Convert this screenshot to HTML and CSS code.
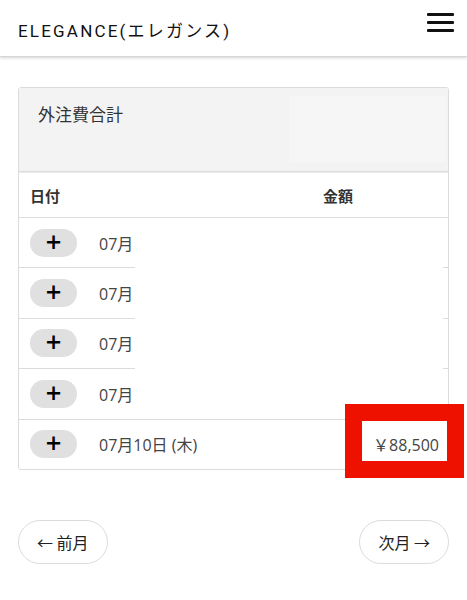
FILE: index.html
```html
<!DOCTYPE HTML>
<html lang="ja">
<head>
	<title>外注費合計</title>
	<meta charset="utf-8">
	<meta name="viewport" content="width=device-width, initial-scale=1">
	<link rel="stylesheet" href="styles.css">
</head>
<body>
	<!-- top bar -->
	<header class="topbar">
		<span class="brand">ELEGANCE(エレガンス)</span>
		<span class="burger"><i></i><i></i><i></i></span>
	</header>

	<main>
		<section class="card">
			<div class="card-head">
				<h3>外注費合計</h3>
				<div class="head-patch"></div>
			</div>

			<div class="list">
				<div class="row row-th">
					<span class="c-date">日付</span>
					<span class="th-amount">金額</span>
				</div>
				<div class="row">
					<span class="plus">+</span>
					<span class="c-date">07月</span>
				</div>
				<div class="row">
					<span class="plus">+</span>
					<span class="c-date">07月</span>
				</div>
				<div class="row">
					<span class="plus">+</span>
					<span class="c-date">07月</span>
				</div>
				<div class="row">
					<span class="plus">+</span>
					<span class="c-date">07月</span>
				</div>
				<div class="row">
					<span class="plus">+</span>
					<span class="c-date">07月10日 (木)</span>
					<span class="c-amount">￥88,500</span>
				</div>

				<!-- masked area + highlight drawn over the list -->
				<div class="mask"></div>
				<div class="mark"></div>
			</div>
		</section>

		<nav class="pager">
			<button class="pg">← 前月</button>
			<button class="pg">次月 →</button>
		</nav>
	</main>
</body>
</html>
```

FILE: styles.css
```css
body {
	margin: 0;
	background: #fff;
	font-family: "Noto Sans CJK JP", "Noto Sans", sans-serif;
	color: #333;
}
.topbar {
	height: 56px;
	display: flex;
	align-items: center;
	justify-content: space-between;
	padding: 0 13px 0 18px;
	border-bottom: 1px solid #d6d6d6;
	box-shadow: 0 1px 3px rgba(0,0,0,0.18);
}
.brand {
	font-family: Roboto, "Noto Sans CJK JP", sans-serif;
	font-size: 17px;
	letter-spacing: 2.2px;
	color: #111;
	margin-top: 2px;
}
.burger {
	display: flex;
	flex-direction: column;
	gap: 5px;
	width: 27px;
	margin-top: -11px;
}
.burger i {
	display: block;
	height: 3px;
	background: #111;
	border-radius: 1px;
}

main {
	padding: 30px 18px 0 18px;
}
.card {
	border: 1px solid #dcdcdc;
	border-radius: 3px;
	background: #fff;
}
.card-head {
	position: relative;
	height: 83px;
	background: #f3f3f3;
	border-bottom: 1px solid #dcdcdc;
	padding: 0 19px;
}
.card-head h3 {
	margin: 0;
	padding-top: 13px;
	font-size: 17px;
	font-weight: normal;
	color: #333;
}
.head-patch {
	position: absolute;
	left: 270px;
	top: 8px;
	width: 157px;
	height: 66px;
	background: #f6f6f6;
}

.list {
	position: relative;
	border-top: 1px solid #ececec;
}
.row {
	height: 49.4px;
	display: flex;
	align-items: center;
	padding: 0 11px;
	border-bottom: 1px solid #dcdcdc;
	font-family: "Open Sans", "Noto Sans CJK JP", sans-serif;
	font-size: 16px;
	color: #444;
}
.row:last-child, .row:nth-last-child(3) {
	border-bottom: none;
}
.row-th {
	height: 44px;
	font-family: "Noto Sans CJK JP", sans-serif;
	font-size: 15px;
	font-weight: bold;
	color: #333;
}
.plus {
	width: 47px;
	height: 28px;
	border-radius: 14px;
	background: #e0e0e0;
	color: #000;
	font-family: "DejaVu Sans", sans-serif;
	font-weight: bold;
	font-size: 21px;
	line-height: 27px;
	text-align: center;
	margin-right: 22px;
}
.c-date {
	flex: 1;
}
.th-amount {
	width: 114px;
}
.c-amount {
	text-align: right;
	margin-right: -2px;
}

.mask {
	position: absolute;
	left: 116px;
	top: 45px;
	width: 308px;
	height: 201px;
	background: #fff;
}
.mark {
	position: absolute;
	left: 326px;
	top: 231px;
	width: 85px;
	height: 40px;
	border: 17px solid #ee1100;
	border-right-width: 17px;
}

.pager {
	display: flex;
	justify-content: space-between;
	margin-top: 50px;
}
.pg {
	height: 44px;
	padding: 0 18px;
	border: 1px solid #dcdcdc;
	border-radius: 22px;
	background: #fff;
	font-family: "Noto Sans CJK JP", sans-serif;
	font-size: 16px;
	color: #222;
}
```
